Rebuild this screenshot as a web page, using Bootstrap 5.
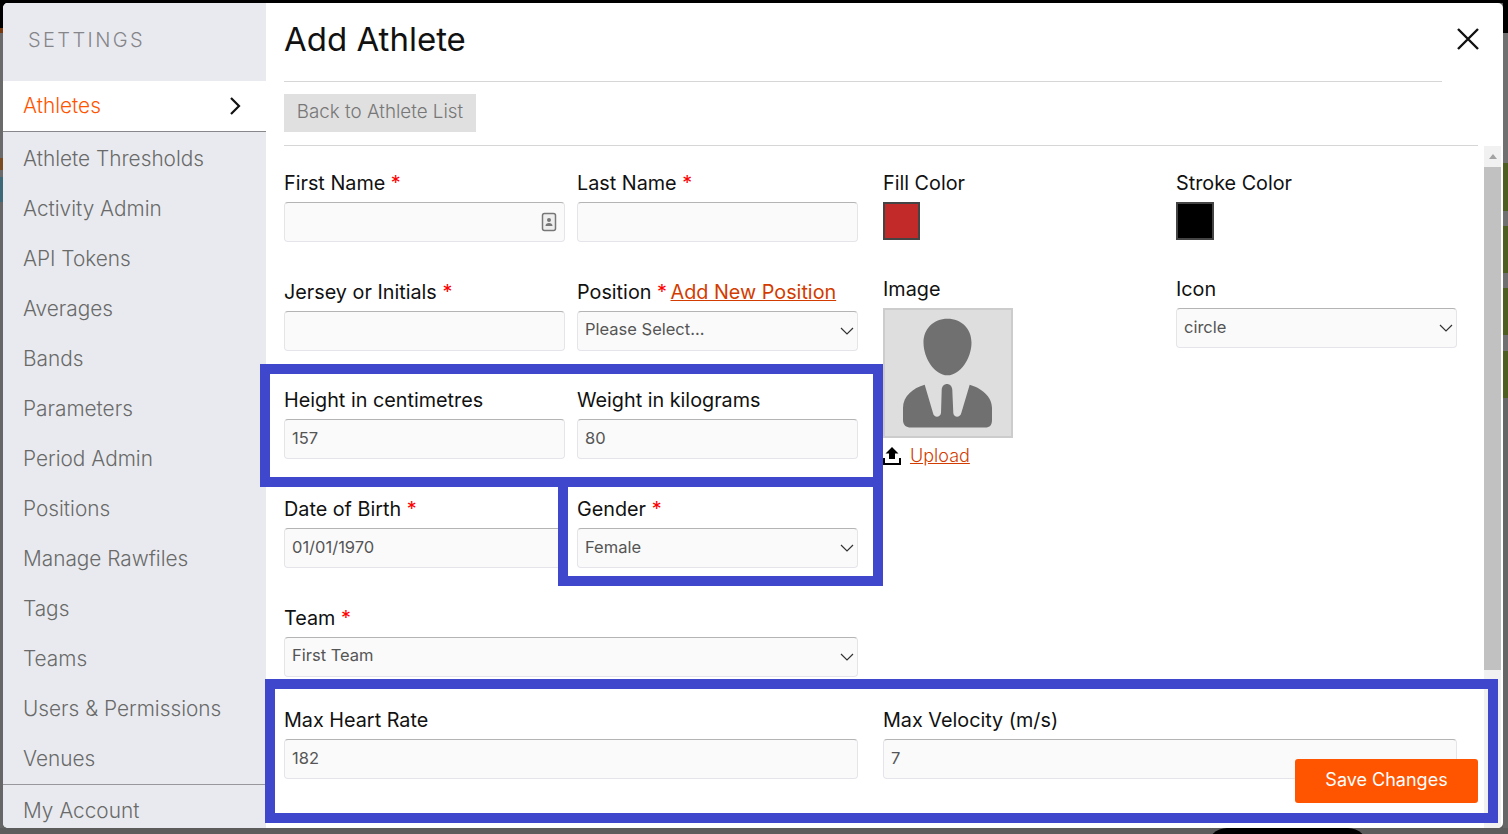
<!DOCTYPE html>
<html>
<head>
<meta charset="utf-8">
<meta name="viewport" content="width=device-width, initial-scale=1">
<title>Add Athlete</title>
<link href="https://cdn.jsdelivr.net/npm/bootstrap@5.3.3/dist/css/bootstrap.min.css" rel="stylesheet">
<script src="https://cdn.jsdelivr.net/npm/bootstrap@5.3.3/dist/js/bootstrap.bundle.min.js"></script>
<style>
html, body { height: 100%; overflow: hidden; }
body {
  background: #5c5c5c;
  font-family: "Inter", "Liberation Sans", sans-serif;
  color: #111;
  position: relative;
}
.top-strip { height: 3px; background: #000; }
.back-left, .back-right { position: absolute; top: 0; width: 5px; height: 828px; }
.back-left { left: 0; background: linear-gradient(#000 0 28px, #7a3a10 28px 33px, #6a6a6a 33px 158px, #7a4a20 158px 170px, #6a6a6a 170px 177px, #3d6878 177px 202px, #666 202px); }
.back-right { left: 1503px; background: linear-gradient(#000 0 33px, #707070 33px 163px, #4d5e20 163px 211px, #707070 211px 226px, #4d5e20 226px 273px, #707070 273px 288px, #4d5e20 288px 335px, #707070 335px 351px, #4d5e20 351px 398px, #666 398px); }
.bottom-pill { position: absolute; left: 1207px; top: 828px; width: 161px; height: 20px; background: #000; border-radius: 20px 20px 0 0; }

.settings-modal {
  position: absolute; left: 3px; top: 3px; width: 1500px; height: 825px;
  background: #fff; border-radius: 5px; overflow: hidden;
  display: flex;
}
.side-panel { width: 263px; flex: none; background: #e9eaef; display: flex; flex-direction: column; }
.side-title { height: 78px; padding: 25px 0 0 25px; font-size: 20px; line-height: 24px; letter-spacing: 2.400px; color: #85858a; font-weight: 300; }
.side-link { display: flex; align-items: center; justify-content: space-between; height: 50px; padding: 2px 24px 0 20px; font-size: 20.800px; color: #6a6a6a; text-decoration: none; font-weight: 300; }
.side-link.current { background: #fff; color: #ff5500; height: 51px; border-bottom: 1px solid #88888c; padding-top: 0; }
.side-link.first-after { margin-top: 1px; }
.side-foot { border-top: 1px solid #98989c; height: 43px; margin-top: 1px; }

.main-panel { flex: 1; min-width: 0; display: flex; flex-direction: column; position: relative; }
.main-head { height: 79px; margin: 0 61px 0 18px; border-bottom: 1px solid #d6d6d6; padding-top: 15px; }
.main-head h1 { font-size: 33px; line-height: 42px; margin: 0; font-weight: 400; color: #111; }
.btn-close-x { position: absolute; top: 22px; right: 22px; width: 26px; height: 26px; padding: 0; border: 0; background: none; }
.back-bar { margin: 0 25px 0 18px; height: 64px; padding-top: 12px; border-bottom: 1px solid #d6d6d6; }
.btn-back { background: #e0e0e0; color: #777; border: 0; border-radius: 0; height: 38px; width: 192px; padding: 0 0 2px; font-size: 18.800px; font-weight: 300; }

.scroll-area { flex: 1; position: relative; display: flex; min-height: 0; }
.form-area { flex: 1; padding: 25px 27px 0 18px; min-width: 0; }
.fake-scroll { position: absolute; top: 0; right: 2px; width: 17px; bottom: 0; background: #f1f1f1; display: flex; flex-direction: column; align-items: center; }
.fake-scroll .arrow { width: 0; height: 0; border-left: 4px solid transparent; border-right: 4px solid transparent; border-bottom: 5px solid #a3a3a3; margin-top: 8px; }
.fake-scroll .thumb { width: 17px; height: 503px; background: #c1c1c1; margin-top: 8px; }

.form-grid { display: grid; grid-template-columns: 574px 574px; column-gap: 25px; }
.pair { display: grid; grid-template-columns: 281px 281px; column-gap: 12px; }
.fld { height: 108.700px; }
.fld-team { height: 102.200px; }
.fld-short { height: 106px; }
.fld label, .lbl { display: block; font-size: 19.800px; line-height: 24px; margin-bottom: 7px; color: #111; font-weight: 400; white-space: nowrap; }
.req { color: #f00; }
.fld .form-control, .fld .form-select {
  height: 40px; font-size: 16.500px; padding: 0 7px 2px; color: #555; font-weight: 400;
  background-color: #fafafa; border: 1px solid #e4e4ea; border-top-color: #b4b4b4; border-radius: 4px;
  box-shadow: none;
}
.fld .form-select {
  padding-right: 30px;
  background-image: url("data:image/svg+xml,%3csvg xmlns='http://www.w3.org/2000/svg' viewBox='0 0 16 16'%3e%3cpath d='M2 5l6 6 6-6' fill='none' stroke='%23333' stroke-width='1.200'/%3e%3c/svg%3e");
  background-position: right 2px center; background-size: 16px 16px;
}
.input-wrap { position: relative; }
.input-wrap svg { position: absolute; right: 8px; top: 10px; }
.add-pos { color: #d23c00; margin-left: -2px; }
.swatch { display: block; height: 38px; border: 2px solid #444; }
.avatar-box { width: 130px; height: 130px; background: #dedede; border: 2px solid #ccc; display: block; }
.upload-row { display: flex; align-items: center; gap: 9px; margin-top: 4px; font-size: 18px; font-weight: 300; }
.upload-row a { color: #d23c00; }
.right-pair { display: grid; grid-template-columns: 281px 281px; column-gap: 12px; }
.btn-save { position: absolute; left: 1295px; top: 759px; width: 183px; height: 44px; background: #ff5500; color: #fff; border: 0; border-radius: 3px; font-size: 18px; padding: 0 0 4px; }
.note-box { position: absolute; border: 10px solid #3f48cc; pointer-events: none; }
</style>
</head>
<body>
<div class="top-strip"></div>
<div class="back-left"></div>
<div class="back-right"></div>
<div class="bottom-pill"></div>

<div class="settings-modal">
  <aside class="side-panel">
    <div class="side-title">SETTINGS</div>
    <a class="side-link current" href="#">Athletes
      <svg width="14" height="20" viewBox="0 0 14 20"><path d="M3 2l8 8-8 8" fill="none" stroke="#111" stroke-width="2.200"/></svg>
    </a>
    <a class="side-link first-after" href="#">Athlete Thresholds</a>
    <a class="side-link" href="#">Activity Admin</a>
    <a class="side-link" href="#">API Tokens</a>
    <a class="side-link" href="#">Averages</a>
    <a class="side-link" href="#">Bands</a>
    <a class="side-link" href="#">Parameters</a>
    <a class="side-link" href="#">Period Admin</a>
    <a class="side-link" href="#">Positions</a>
    <a class="side-link" href="#">Manage Rawfiles</a>
    <a class="side-link" href="#">Tags</a>
    <a class="side-link" href="#">Teams</a>
    <a class="side-link" href="#">Users &amp; Permissions</a>
    <a class="side-link" href="#">Venues</a>
    <div class="side-foot"><a class="side-link" href="#">My Account</a></div>
  </aside>

  <main class="main-panel">
    <div class="main-head"><h1>Add Athlete</h1></div>
    <button class="btn-close-x" type="button" aria-label="Close">
      <svg width="26" height="26" viewBox="0 0 26 26"><path d="M3 3l20 20M23 3L3 23" stroke="#111" stroke-width="2.400" fill="none"/></svg>
    </button>
    <div class="back-bar"><button class="btn btn-back" type="button">Back to Athlete List</button></div>

    <div class="scroll-area">
      <form class="form-area">
        <div class="form-grid">
          <div>
            <div class="pair">
              <div class="fld">
                <label>First Name <span class="req">*</span></label>
                <div class="input-wrap">
                  <input class="form-control" type="text">
                  <svg width="16" height="20" viewBox="0 0 16 20"><rect x="1.500" y="1.500" width="13" height="17" rx="2" fill="#eee" stroke="#777" stroke-width="1.500"/><circle cx="8" cy="8" r="2" fill="#777"/><path d="M4.500 14c0-2 1.500-3 3.500-3s3.500 1 3.500 3z" fill="#777"/></svg>
                </div>
              </div>
              <div class="fld"><label>Last Name <span class="req">*</span></label><input class="form-control" type="text"></div>
              <div class="fld"><label>Jersey or Initials <span class="req">*</span></label><input class="form-control" type="text"></div>
              <div class="fld"><label>Position <span class="req">*</span> <a class="add-pos" href="#">Add New Position</a></label>
                <select class="form-select"><option>Please Select...</option></select></div>
              <div class="fld"><label>Height in centimetres</label><input class="form-control" type="text" value="157"></div>
              <div class="fld"><label>Weight in kilograms</label><input class="form-control" type="text" value="80"></div>
              <div class="fld"><label>Date of Birth <span class="req">*</span></label><input class="form-control" type="text" value="01/01/1970"></div>
              <div class="fld"><label>Gender <span class="req">*</span></label><select class="form-select"><option>Female</option></select></div>
            </div>
            <div class="fld-team fld"><label>Team <span class="req">*</span></label><select class="form-select"><option>First Team</option></select></div>
          </div>
          <div class="right-pair align-content-start">
            <div class="fld fld-short"><span class="lbl">Fill Color</span><span class="swatch" style="width:37px;background:#c22a2a"></span></div>
            <div class="fld fld-short"><span class="lbl">Stroke Color</span><span class="swatch" style="width:38px;background:#000"></span></div>
            <div class="fld">
              <span class="lbl">Image</span>
              <svg class="avatar-box" viewBox="2 2 126 126">
                <path d="M64.500 10.700c-14 0-24 10-24 24 0 15 11 32.600 24 32.600s24-17.600 24-32.600c0-14-10-24-24-24z" fill="#707070"/>
                <path d="M41.700 76.700C30 80 20 88 20 100v12c0 5 3 7.500 8 7.500h74c5 0 7-2.500 7-7.500v-12c0-12-11-20-22.300-23.300L78.300 105c-1.300 5-7.300 5-8 0l-1-23c-.3-8-10.300-8-10.600 0l-.7 23c-1 5-7 5-8 0z" fill="#707070"/>
              </svg>
              <div class="upload-row">
                <svg width="18" height="18" viewBox="0 0 18 18"><path d="M9 0L2.500 6.500H6V12h6V6.500h3.500z" fill="#000"/><path d="M1 11v6h16v-6" fill="none" stroke="#000" stroke-width="2"/></svg>
                <a href="#">Upload</a>
              </div>
            </div>
            <div class="fld"><span class="lbl">Icon</span><select class="form-select"><option>circle</option></select></div>
          </div>
          <div class="fld"><label>Max Heart Rate</label><input class="form-control" type="text" value="182"></div>
          <div class="fld"><label>Max Velocity (m/s)</label><input class="form-control" type="text" value="7"></div>
        </div>
      </form>
      <div class="fake-scroll"><span class="arrow"></span><span class="thumb"></span></div>
    </div>
  </main>
</div>

<button class="btn btn-save" type="button">Save Changes</button>
<div class="note-box" style="left:260px;top:364px;width:623px;height:123px"></div>
<div class="note-box" style="left:558px;top:477px;width:325px;height:109px"></div>
<div class="note-box" style="left:265px;top:679px;width:1233px;height:144px"></div>
</body>
</html>
